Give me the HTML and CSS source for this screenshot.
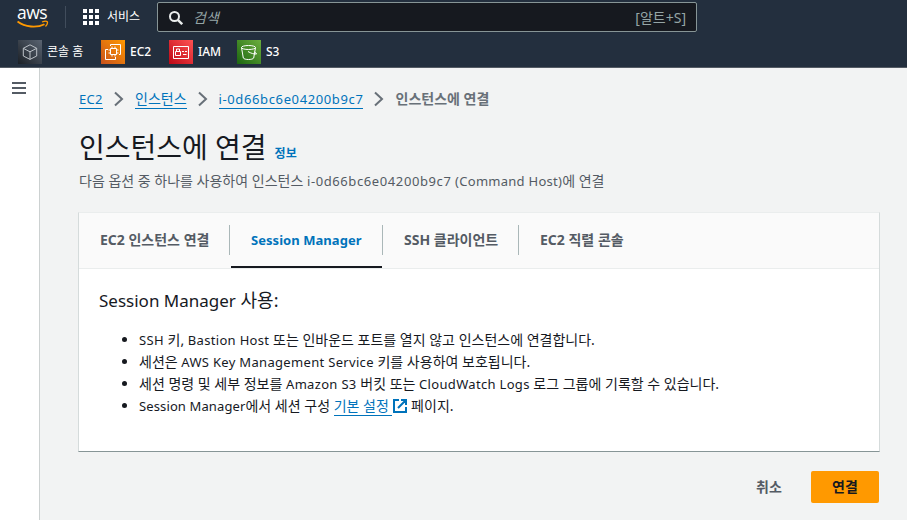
FILE: index.html
```html
<!DOCTYPE html>
<html lang="ko">
<head>
<meta charset="utf-8">
<title>인스턴스에 연결</title>
<link rel="stylesheet" href="styles.css">
</head>
<body>
<header class="top">
  <div class="bar">
    <a class="logo"><span>aws</span>
      <svg width="32" height="9" viewBox="0 0 32 9" fill="none" stroke="#ff9900"><path d="M.5 1.500C8 7.400 20 8 27.500 4.200" stroke-width="1.800"/><path d="M25 2c2-.8 4.500-1 5.300-.2.4 1-.5 3.400-1.800 4.700" stroke-width="1.300"/></svg>
    </a>
    <i class="rule"></i>
    <a class="services"><svg width="16" height="16" fill="#fff"><path d="M0 0h4v4H0zM6 0h4v4H6zM12 0h4v4h-4zM0 6h4v4H0zM6 6h4v4H6zM12 6h4v4h-4zM0 12h4v4H0zM6 12h4v4H6zM12 12h4v4h-4z"/></svg><span>서비스</span></a>
    <div class="search">
      <svg width="14" height="14" viewBox="0 0 14 14" fill="none" stroke="#eaeded" stroke-width="2"><circle cx="5.500" cy="5.500" r="4.500"/><path d="M8.800 8.800l4.400 4.400" stroke-width="2.400"/></svg>
      <em>검색</em><span class="key">[알트+S]</span>
    </div>
  </div>
  <nav class="favs">
    <a class="fav f1"><svg class="ic home" viewBox="0 0 24 24"><path d="M12 4.800l6.700 3.500v7.700L12 19.400l-6.700-3.400V8.300zM5.300 8.300l6.700 3.500 6.700-3.500M12 11.800v7.600"/></svg><span>콘솔 홈</span></a>
    <a class="fav f2"><svg class="ic ec2" viewBox="0 0 24 24"><path d="M9.500 8.500h6v6h-6zM11 6.500v2M14 6.500v2M11 14.500v2M14 14.500v2M7.500 10h2M7.500 13h2M15.500 10h2M15.500 13h2M9.500 6V4.500h10v10H18M7 9.500H4.500v10h10V17"/></svg><span>EC2</span></a>
    <a class="fav f3"><svg class="ic iam" viewBox="0 0 24 24"><path d="M4.500 6.500h15v12h-15zM6.500 11.500h5v4h-5zM7.500 11.500v-2.500h3v2.500M13 11.500h2M16 11.500h2M14 14.500h3.500"/></svg><span>IAM</span></a>
    <a class="fav f4"><svg class="ic s3" viewBox="0 0 24 24"><ellipse cx="11.500" cy="7.500" rx="7" ry="2"/><path d="M4.500 7.500l1.800 10.500c1 2 9.400 2 10.400 0l1.800-10.500M11 11.500c3 1.800 6 2.800 8.500 2.500-.3-1-1-1.600-2-2"/></svg><span>S3</span></a>
  </nav>
</header>
<div class="shell">
  <aside class="side"><svg width="14" height="12" fill="#545b64"><path d="M0 0h14v2H0zM0 5h14v2H0zM0 10h14v2H0z"/></svg></aside>
  <main class="main">
    <nav class="crumbs">
      <a class="c-ec2">EC2</a><svg class="chev" viewBox="0 0 10 16"><path d="M1 1.500L8 8 1 14.500"/></svg>
      <a>인스턴스</a><svg class="chev" viewBox="0 0 10 16"><path d="M1 1.500L8 8 1 14.500"/></svg>
      <a class="c-id">i-0d66bc6e04200b9c7</a><svg class="chev" viewBox="0 0 10 16"><path d="M1 1.500L8 8 1 14.500"/></svg>
      <b>인스턴스에 연결</b>
    </nav>
    <div class="title"><h1>인스턴스에 연결</h1><a>정보</a></div>
    <p class="desc">다음 옵션 중 하나를 사용하여 인스턴스 <span class="lat id">i-0d66bc6e04200b9c7</span> <span class="lat">(Command Host)</span>에 연결</p>
    <section class="card">
      <div class="tabs">
        <div class="tab t1"><span>EC2 인스턴스 연결</span></div>
        <div class="tab t2 active"><span>Session Manager</span></div>
        <div class="tab t3"><span>SSH 클라이언트</span></div>
        <div class="tab t4"><span>EC2 직렬 콘솔</span></div>
      </div>
      <div class="body">
        <h2><span>Session Manager</span> 사용:</h2>
        <ul>
          <li><span class="lat">SSH</span> 키, <span class="lat">Bastion Host</span> 또는 인바운드 포트를 열지 않고 인스턴스에 연결합니다.</li>
          <li>세션은 <span class="lat">AWS Key Management Service</span> 키를 사용하여 보호됩니다.</li>
          <li>세션 명령 및 세부 정보를 <span class="lat">Amazon S3</span> 버킷 또는 <span class="lat">CloudWatch Logs</span> 로그 그룹에 기록할 수 있습니다.</li>
          <li><span class="lat sm">Session Manager</span>에서 세션 구성 <a>기본 설정&nbsp;</a><svg class="ext" viewBox="0 0 14 14"><path d="M6 1H1v12h12V8M8 1h5v5M13 1L5 9"/></svg> 페이지.</li>
        </ul>
      </div>
    </section>
    <div class="actions"><button class="cancel">취소</button><button class="go">연결</button></div>
  </main>
</div>
</body>
</html>
```
FILE: styles.css
```css
* { box-sizing: border-box; }
body { margin: 0; height: 520px; overflow: hidden; background: #f2f3f3; color: #16191f; font: 14px/22px "Noto Sans", "Noto Sans CJK KR", sans-serif; }
svg { display: block; flex: none; }
.top { height: 68px; background: #232f3e; border-bottom: 1px solid #545b64; color: #fff; }
.bar { display: flex; height: 34px; padding-left: 17px; }
.logo { width: 32px; margin-top: 5px; }
.logo span { display: block; height: 15px; font: 500 17.5px/15px "Open Sans", sans-serif; letter-spacing: -.5px; }
.rule { width: 1px; height: 22px; margin: 6px 17px 0 16px; background: #414d5c; }
.services { display: flex; align-items: center; gap: 8px; width: 74px; font-size: 12px; }
.search { display: flex; align-items: center; width: 540px; height: 30px; margin-top: 2px; padding: 1px 10px 0 11px; background: #16191f; border: 1px solid #879596; border-radius: 2px; color: #95a5a6; }
.search em { margin-left: 10px; }
.key { margin-left: auto; }
.favs { display: flex; padding: 6px 0 0 18px; font-size: 12px; }
.fav { display: flex; align-items: center; gap: 5px; height: 24px; }
.f1 { width: 83px; }
.f2, .f3 { width: 68px; }
.ic { width: 24px; height: 24px; fill: none; stroke: #fff; stroke-width: 1; }
.home { background: linear-gradient(45deg, #1b2026, #5a6472); stroke: #bcc1c7; }
.ec2 { background: linear-gradient(45deg, #c8511b, #ff9900); }
.iam { background: linear-gradient(45deg, #bd0816, #ff5252); }
.s3 { background: linear-gradient(45deg, #1b660f, #6cae3e); }
.f2 span, .f3 span, .f4 span { font-weight: 500; }
.shell { display: flex; height: 452px; }
.side { width: 40px; padding: 14px 0 0 12px; background: #fff; border-right: 1px solid #ccd1d1; }
.main { width: 840px; padding: 20px 0 0 39px; }
.crumbs { display: flex; align-items: center; height: 22px; color: #687078; white-space: nowrap; }
.crumbs a, li a { color: #0073bb; border-bottom: 1px solid #0073bb; }
.crumbs a { height: 20px; line-height: 20px; }
.c-ec2 { width: 24px; font-size: 13px; letter-spacing: .3px; }
.c-id { width: 144px; font-size: 13px; letter-spacing: .62px; }
.chev { width: 10px; height: 16px; margin: 0 11px; fill: none; stroke: #687078; stroke-width: 2; }
.crumbs b { margin-left: 1px; }
.title { display: flex; align-items: baseline; gap: 8px; margin-top: 19px; height: 36px; }
h1 { margin: 0; font-size: 28px; line-height: 36px; font-weight: 400; }
.title a { color: #0073bb; font-size: 12px; font-weight: 700; }
.desc { margin: 5px 0 0; height: 22px; color: #545b64; }
.lat { font-size: 13px; line-height: 1; letter-spacing: .27px; }
li .lat { font-weight: 450; letter-spacing: .32px; }
li .sm { letter-spacing: .12px; }
.desc .id { letter-spacing: .6px; }
.card { width: 802px; height: 240px; margin: 20px 0 0 -1px; background: #fff; border: 1px solid #d5dbdb; border-top-color: #eaeded; border-bottom-color: #879596; }
.tabs { display: flex; height: 56px; background: #fafafa; border-bottom: 1px solid #eaeded; }
.tab { position: relative; display: flex; align-items: center; height: 55px; padding: 0 0 2px 21px; font-weight: 700; color: #545b64; }
.tab:not(.t4)::after { content: ""; position: absolute; right: 0; top: 12px; width: 1px; height: 30px; background: #aab7b8; }
.t1 { width: 151px; }
.t2 { width: 153px; font-size: 13px; letter-spacing: .05px; }
.t3 { width: 136px; }
.active { color: #0073bb; }
.active::before { content: ""; position: absolute; left: 1px; right: 1px; bottom: 0; height: 2px; background: #16191f; }
.body { padding: 20px; }
h2 { margin: 0; height: 22px; font-size: 18px; line-height: 22px; font-weight: 400; }
h2 span { font-size: 17px; line-height: 1; }
ul { margin: 18px 0 0; padding-left: 40px; }
li { height: 22px; white-space: nowrap; }
.ext { display: inline-block; width: 14px; height: 14px; margin-left: 1px; vertical-align: -2px; fill: none; stroke: #0073bb; stroke-width: 2; }
.actions { display: flex; justify-content: flex-end; margin: 19px 1px 0 0; }
button { height: 32px; padding: 0; border: 0; border-radius: 2px; background: none; color: #545b64; font: 700 14px/20px "Noto Sans", "Noto Sans CJK KR", sans-serif; }
.cancel { width: 66px; margin-right: 9px; }
.go { width: 68px; background: #ff9900; color: #16191f; }
```
